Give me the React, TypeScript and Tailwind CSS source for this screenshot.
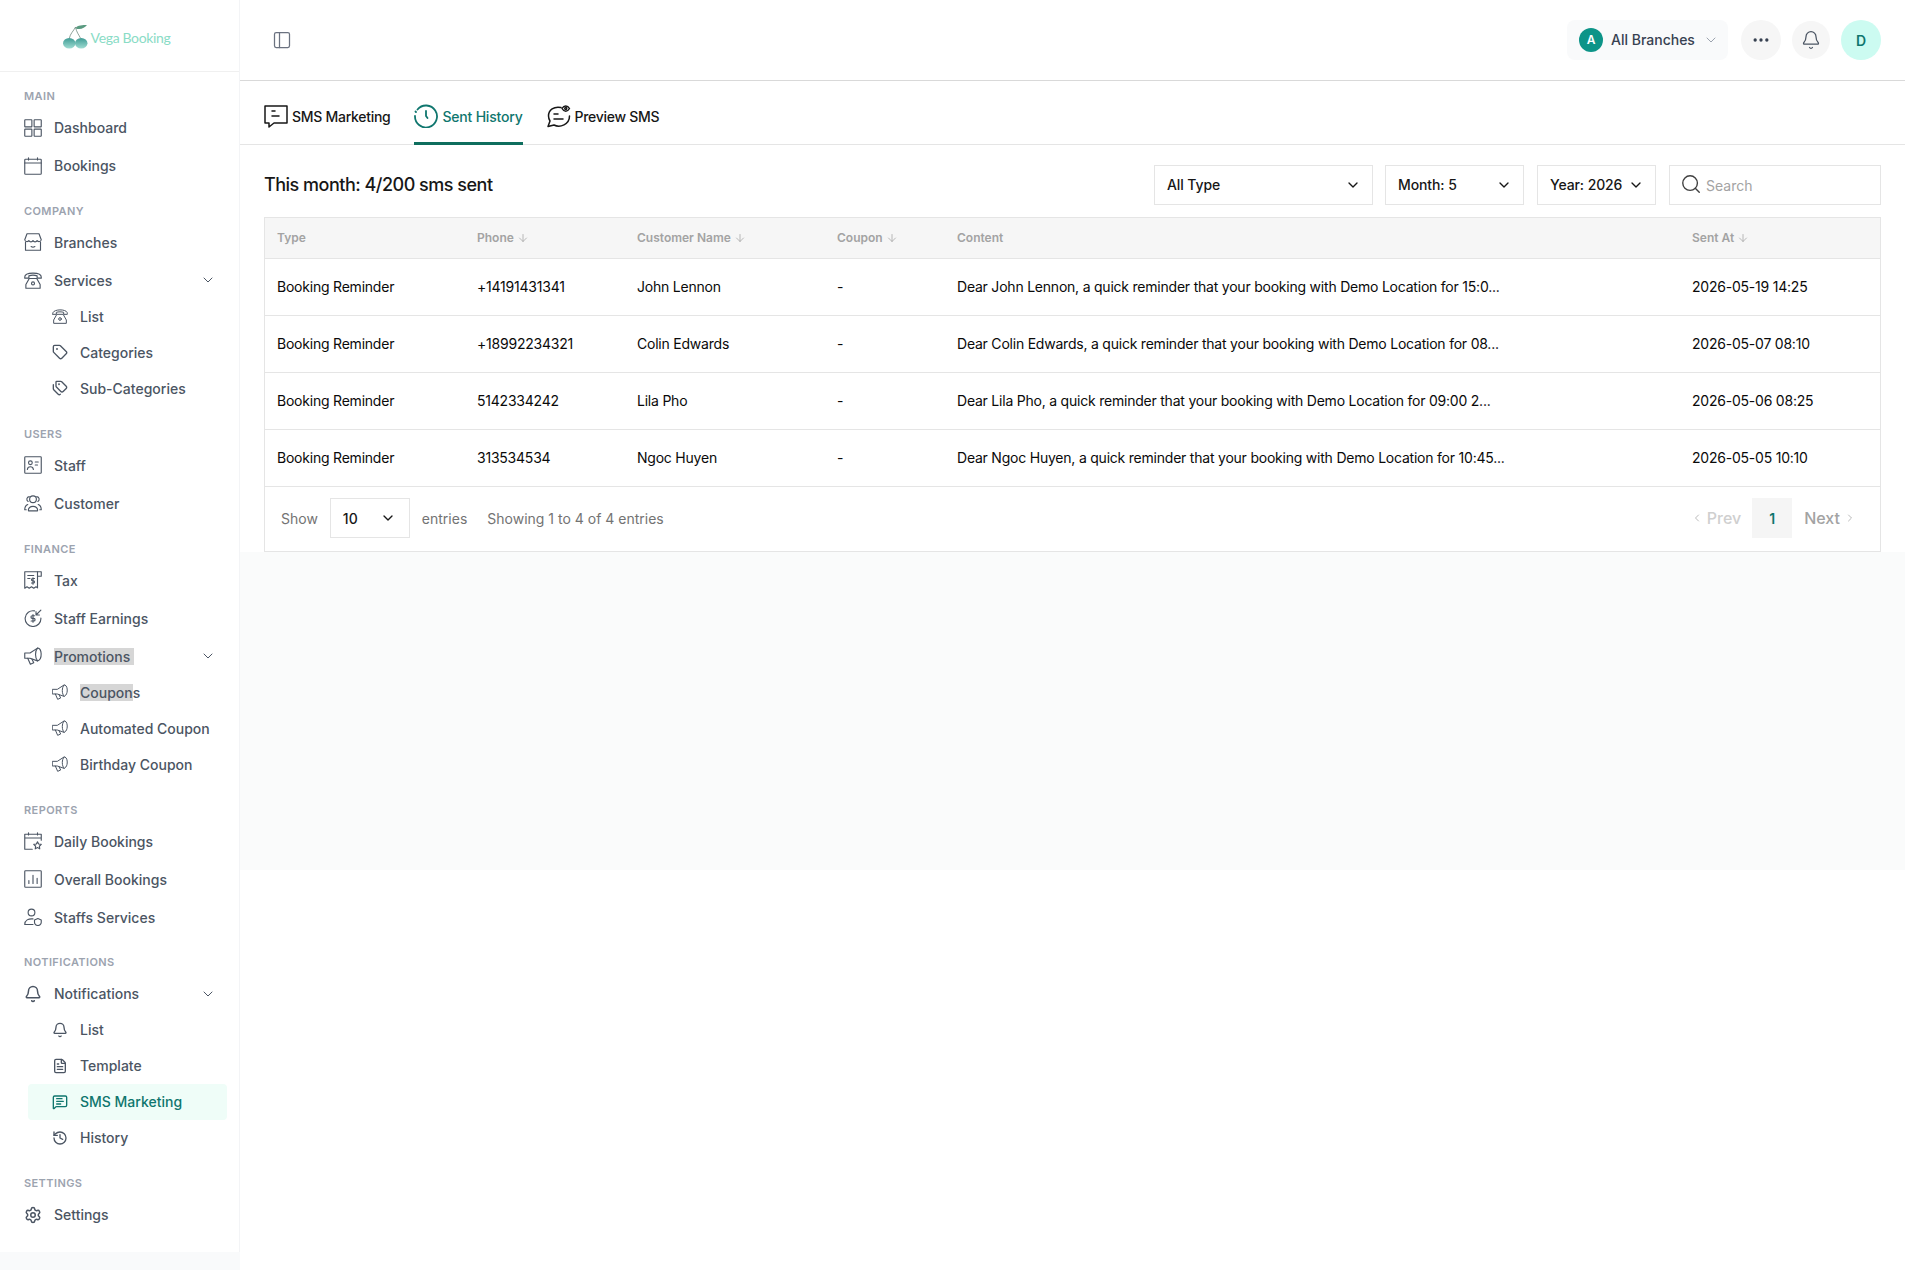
import { ReactNode } from 'react';
import { Bell, ChevronDown, ChevronLeft, ChevronRight, ArrowDown, Ellipsis, FileText, History, MessageSquareText, PanelLeft, Search, Settings, Tag, Tags } from 'lucide-react';

type IconProps = { className?: string };

const Svg = ({ className, children, width = 1.5 }: IconProps & { children: ReactNode; width?: number }) => (
  <svg viewBox="0 0 24 24" fill="none" stroke="currentColor" strokeWidth={width} strokeLinecap="round" strokeLinejoin="round" className={className}>
    {children}
  </svg>
);

const GridIcon = ({ className }: IconProps) => (
  <Svg className={className}>
    <rect x="1" y="1" width="9.5" height="9.5" rx="0.6" />
    <rect x="13.5" y="1" width="9.5" height="9.5" rx="0.6" />
    <rect x="1" y="13.5" width="9.5" height="9.5" rx="0.6" />
    <rect x="13.5" y="13.5" width="9.5" height="9.5" rx="0.6" />
  </Svg>
);
const CalendarIcon = ({ className }: IconProps) => (
  <Svg className={className}>
    <rect x="1" y="3" width="22" height="20" rx="1" />
    <path d="M1 8h22M6 1v3M18 1v3" />
  </Svg>
);
const StoreIcon = ({ className }: IconProps) => (
  <Svg className={className}>
    <path d="M4 1h16l3 8a3 3 0 0 1-5.500 1 3 3 0 0 1-5.500 0 3 3 0 0 1-5.500 0A3 3 0 0 1 1 9z" />
    <path d="M2 12v11h20V12M9.500 18c1.500 1 3.500 1 5 0" />
  </Svg>
);
const PhoneIcon = ({ className }: IconProps) => (
  <Svg className={className}>
    <path d="M1 8c0-7 22-7 22 0v1.500h-5.500V6.500c-3-1-8-1-11 0v3H1z" />
    <path d="M7 10l-4.500 8v5h19v-5L17 10z" />
    <circle cx="12" cy="16.500" r="2" />
  </Svg>
);
const StaffIcon = ({ className }: IconProps) => (
  <Svg className={className}>
    <rect x="1" y="1" width="22" height="22" rx="1" />
    <circle cx="8.500" cy="9" r="2.500" />
    <path d="M4.500 18c.5-5 7.500-5 8 0M15 8h4M15 12h3" />
  </Svg>
);
const CustomerIcon = ({ className }: IconProps) => (
  <Svg className={className}>
    <circle cx="12" cy="7" r="4.500" />
    <path d="M5.500 10A3.500 3.500 0 0 1 7 3.500M18.500 10A3.500 3.500 0 0 0 17 3.500" />
    <path d="M6 22.500c-1.500-8 13.500-8 12 0z" />
    <path d="M3 21H1c0-4 1.500-6 4-7M21 21h2c0-4-1.500-6-4-7" />
  </Svg>
);
const TaxIcon = ({ className }: IconProps) => (
  <Svg className={className}>
    <path d="M18 1H1v22l3-2 3 2 3-2 3 2 3-2 2 1.500V1" />
    <path d="M18 1h5v6h-5M5 6h8M5 10h3" />
    <path d="M14 10h-2.500a1.500 1.500 0 0 0 0 3h1a1.500 1.500 0 0 1 0 3H10M12 9v8.500" />
  </Svg>
);
const EarningsIcon = ({ className }: IconProps) => (
  <Svg className={className}>
    <path d="M14 2.500A10.500 10.500 0 1 0 22.500 12" />
    <path d="M22.500 1.500 16 8M16 3.500V8h4.500" />
    <path d="M14 9h-3a1.500 1.500 0 0 0 0 3.500h2a1.500 1.500 0 0 1 0 3.500H9.500M12 7.500v10" />
  </Svg>
);
const MegaphoneIcon = ({ className }: IconProps) => (
  <Svg className={className}>
    <path d="M1 8h7l10-6.500c6-1 7 15 0 17L8 15H1z" />
    <path d="M18 1.500c-3.500 4-3.500 13 0 17" />
    <path d="m5 15 3.500 8 4.500-2-2.500-5" />
  </Svg>
);
const DailyIcon = ({ className }: IconProps) => (
  <Svg className={className}>
    <path d="M11 23H1V3h22v8M1 8h22M6 1v3M18 1v3" />
    <path d="m18 13 1.500 3 3.500.5-2.500 2.500.5 3.500-3-1.700-3 1.700.5-3.500-2.500-2.500 3.500-.5z" />
  </Svg>
);
const BarsIcon = ({ className }: IconProps) => (
  <Svg className={className}>
    <rect x="1" y="1" width="22" height="22" rx="1" />
    <path d="M6.500 18v-4M12 18V7M17.500 18v-7" />
  </Svg>
);
const StaffServiceIcon = ({ className }: IconProps) => (
  <Svg className={className}>
    <circle cx="10" cy="6" r="4.500" />
    <path d="M1 22c0-6 5-8 11-7.500M1 22h11" />
    <path d="M18.500 14l4.500 2v3c0 2.500-2 4-4.500 4.500-2.500-.5-4.500-2-4.500-4.500v-3z" />
  </Svg>
);
const ChatTabIcon = ({ className }: IconProps) => (
  <Svg className={className}>
    <path d="M1 2h22v17H10l-5 4v-4H1z" />
    <path d="M8 7h3M8 12h7" />
  </Svg>
);
const ClockTabIcon = ({ className }: IconProps) => (
  <Svg className={className} width={1.8}>
    <path d="M3.500 5.500A11 11 0 1 1 1 12" />
    <path d="M1.500 7.500 2 8M12 7v5l1.500 2" />
  </Svg>
);
const PreviewTabIcon = ({ className }: IconProps) => (
  <Svg className={className}>
    <path d="M14 3.500C7 2 1.500 6 1.500 12c0 2 .6 3.500 1.500 5l-2 5.500 6-1.500c6 3 15.500-.5 15.500-9" />
    <path d="M7 10h4M7 15h9" />
    <path d="M15 4.500c2-3.500 5.500-3.500 7.500 0-2 3.500-5.500 3.500-7.500 0z" />
    <circle cx="18.750" cy="4.500" r="1" />
  </Svg>
);
const BoldSms = ({ className }: IconProps) => <MessageSquareText className={className} strokeWidth={2} />;
const BoldHistory = ({ className }: IconProps) => <History className={className} strokeWidth={2} />;

const Logo = () => (
  <div className="flex items-center gap-[3px] -ml-[6px] mt-[3px]">
    <svg viewBox="0 0 24 24" className="w-[25px] h-[25px]">
      <defs>
        <linearGradient id="cherry" x1="0" y1="0" x2="0" y2="1">
          <stop offset="0" stopColor="#3f9c95" />
          <stop offset="1" stopColor="#9fdcd2" />
        </linearGradient>
      </defs>
      <path d="M12 2 C 10 6, 7 8, 6 13 M12 2 C 13 7, 15 9, 17 13" fill="none" stroke="#4b6b5f" strokeWidth="0.6" />
      <path d="M12 3 C 14 0, 19 0, 23 0 C 21 3, 16 5, 12 3z" fill="#5a9a80" />
      <ellipse cx="6" cy="17.500" rx="6" ry="5" fill="url(#cherry)" />
      <ellipse cx="17.500" cy="17.500" rx="6" ry="5" fill="url(#cherry)" />
    </svg>
    <span className="[font-family:Lato,sans-serif] text-[14px] font-normal tracking-[-0.35px] text-[#8adcc6]">Vega Booking</span>
  </div>
);

type Item = { label: ReactNode; icon: (p: IconProps) => ReactNode; open?: boolean; children?: { label: ReactNode; icon: (p: IconProps) => ReactNode; active?: boolean }[] };
type Group = { title: string; items: Item[] };

const groups: Group[] = [
  { title: 'MAIN', items: [{ label: 'Dashboard', icon: GridIcon }, { label: 'Bookings', icon: CalendarIcon }] },
  {
    title: 'COMPANY',
    items: [
      { label: 'Branches', icon: StoreIcon },
      {
        label: 'Services',
        icon: PhoneIcon,
        open: true,
        children: [
          { label: 'List', icon: PhoneIcon },
          { label: 'Categories', icon: Tag },
          { label: 'Sub-Categories', icon: Tags },
        ],
      },
    ],
  },
  { title: 'USERS', items: [{ label: 'Staff', icon: StaffIcon }, { label: 'Customer', icon: CustomerIcon }] },
  {
    title: 'FINANCE',
    items: [
      { label: 'Tax', icon: TaxIcon },
      { label: 'Staff Earnings', icon: EarningsIcon },
      {
        label: <span className="bg-[#d6d6d6] pr-1">Promotions</span>,
        icon: MegaphoneIcon,
        open: true,
        children: [
          { label: <><span className="bg-[#d6d6d6]">Coupon</span>s</>, icon: MegaphoneIcon },
          { label: 'Automated Coupon', icon: MegaphoneIcon },
          { label: 'Birthday Coupon', icon: MegaphoneIcon },
        ],
      },
    ],
  },
  {
    title: 'REPORTS',
    items: [
      { label: 'Daily Bookings', icon: DailyIcon },
      { label: 'Overall Bookings', icon: BarsIcon },
      { label: 'Staffs Services', icon: StaffServiceIcon },
    ],
  },
  {
    title: 'NOTIFICATIONS',
    items: [
      {
        label: 'Notifications',
        icon: Bell,
        open: true,
        children: [
          { label: 'List', icon: Bell },
          { label: 'Template', icon: FileText },
          { label: 'SMS Marketing', icon: BoldSms, active: true },
          { label: 'History', icon: BoldHistory },
        ],
      },
    ],
  },
  { title: 'SETTINGS', items: [{ label: 'Settings', icon: Settings }] },
];

const rows = [
  ['Booking Reminder', '+14191431341', 'John Lennon', '-', 'Dear John Lennon, a quick reminder that your booking with Demo Location for 15:0...', '2026-05-19 14:25'],
  ['Booking Reminder', '+18992234321', 'Colin Edwards', '-', 'Dear Colin Edwards, a quick reminder that your booking with Demo Location for 08...', '2026-05-07 08:10'],
  ['Booking Reminder', '5142334242', 'Lila Pho', '-', 'Dear Lila Pho, a quick reminder that your booking with Demo Location for 09:00 2...', '2026-05-06 08:25'],
  ['Booking Reminder', '313534534', 'Ngoc Huyen', '-', 'Dear Ngoc Huyen, a quick reminder that your booking with Demo Location for 10:45...', '2026-05-05 10:10'],
];

const Sidebar = () => (
  <aside className="w-[240px] shrink-0 bg-[#f9fafb]">
    <div className="h-[1252px] bg-white border-r border-[#f3f4f6]">
      <div className="h-[72px] flex items-center justify-center border-b border-[#f0f0f0]">
        <Logo />
      </div>
      <nav className="pt-4 flex flex-col gap-[18.4px]">
        {groups.map((g) => (
          <div key={g.title}>
            <div className="h-4 mb-[4.5px] pl-6 text-[11px] leading-4 font-semibold tracking-[0.4px] text-[#9ca3af]">{g.title}</div>
            {g.items.map((it, i) => (
              <div key={i}>
                <div className="h-[38px] pl-6 pr-[23px] flex items-center text-[14px] font-medium text-[#4b5563]">
                  <it.icon className="w-[18px] h-[18px] mr-3 shrink-0 text-[#4b5563]" />
                  <span className="flex-1">{it.label}</span>
                  {it.open && <ChevronDown className="w-4 h-4 text-[#4b5563]" strokeWidth={1.5} />}
                </div>
                {it.children && (
                  <div className="-mt-px mb-px">
                    {it.children.map((c, j) => (
                      <div key={j} className={`h-9 ml-7 mr-3 pl-6 flex items-center text-[14px] font-medium rounded ${c.active ? 'bg-[#effdf8] text-[#0f766e]' : 'text-[#4b5563]'}`}>
                        <c.icon className="w-4 h-4 mr-3 shrink-0" />
                        <span>{c.label}</span>
                      </div>
                    ))}
                  </div>
                )}
              </div>
            ))}
          </div>
        ))}
      </nav>
    </div>
  </aside>
);

const Header = () => (
  <header className="h-[81px] bg-white border-b border-[#d9d9d9] flex items-center pl-8 pr-6">
    <PanelLeft className="w-5 h-5 text-[#6b7280]" strokeWidth={1.5} />
    <div className="ml-auto flex items-center">
      <div className="h-10 w-[161px] rounded-lg bg-[#f9fafb] flex items-center pl-3 text-[14px] font-medium text-[#374151]">
        <span className="w-6 h-6 rounded-full bg-[#0d9488] text-white text-[12px] font-semibold flex items-center justify-center">A</span>
        <span className="ml-2 -mt-px">All Branches</span>
        <ChevronDown className="w-4 h-4 ml-2 text-[#9ca3af]" strokeWidth={1.5} />
      </div>
      <div className="ml-[13px] w-10 h-10 rounded-full bg-[#f6f6f6] flex items-center justify-center text-[#374151]">
        <Ellipsis className="w-5 h-5" />
      </div>
      <div className="ml-[11px] w-[38px] h-[38px] rounded-full bg-[#f6f6f6] flex items-center justify-center text-[#4b5563]">
        <Bell className="w-5 h-5" strokeWidth={1.5} />
      </div>
      <div className="ml-[11px] w-10 h-10 rounded-full bg-[#ccfbf1] flex items-center justify-center text-[14px] font-semibold text-[#0f766e]">D</div>
    </div>
  </header>
);

const Tabs = () => (
  <div className="h-[64px] bg-white border-b border-[#e5e5e5] flex gap-6 pl-6 text-[14px] font-medium tracking-[-0.28px] text-[#171717]">
    <div className="flex items-center gap-1 h-[64px] pt-[9px] border-b-[3px] border-transparent">
      <ChatTabIcon className="w-6 h-6" />
      <span>SMS Marketing</span>
    </div>
    <div className="flex items-center gap-1 h-[64px] pt-[9px] border-b-[3px] border-[#0f6e5e] text-[#0f766e]">
      <ClockTabIcon className="w-6 h-6" />
      <span className="tracking-[-0.2px]">Sent History</span>
    </div>
    <div className="flex items-center gap-1 h-[64px] pt-[9px] border-b-[3px] border-transparent">
      <PreviewTabIcon className="w-6 h-6" />
      <span>Preview SMS</span>
    </div>
  </div>
);

const Filter = ({ label, w }: { label: string; w: string }) => (
  <div className={`${w} h-10 border border-[#e5e5e5] flex items-center justify-between pl-3 pr-[11px] text-[14px] font-medium tracking-[-0.1px] text-[#171717]`}>
    <span className="-mt-px">{label}</span>
    <ChevronDown className="w-4 h-4" strokeWidth={2} />
  </div>
);

const Th = ({ w, label, sort }: { w: string; label: string; sort?: boolean }) => (
  <div className={`${w} px-3 flex items-center gap-[3px] text-[12px] font-semibold text-[#a3a3a3]`}>
    {label}
    {sort && <ArrowDown className="w-3 h-3" strokeWidth={1.5} />}
  </div>
);

const colW = ['w-[200px]', 'w-[160px]', 'w-[200px]', 'w-[120px]', 'w-[735px]', 'w-[200px]'];

const Table = () => (
  <div className="border border-[#e5e5e5] bg-white">
    <div className="h-[41px] bg-[#f6f6f6] border-b border-[#e5e5e5] flex">
      <Th w={colW[0]} label="Type" />
      <Th w={colW[1]} label="Phone" sort />
      <Th w={colW[2]} label="Customer Name" sort />
      <Th w={colW[3]} label="Coupon" sort />
      <Th w={colW[4]} label="Content" />
      <Th w={colW[5]} label="Sent At" sort />
    </div>
    {rows.map((r) => (
      <div key={r[1]} className="h-[57px] pb-[2px] border-b border-[#e5e5e5] flex items-center text-[14px] tracking-[-0.22px] text-[#0a0a0a]">
        {r.map((c, i) => (
          <div key={i} className={`${colW[i]} px-3 whitespace-nowrap`}>{c}</div>
        ))}
      </div>
    ))}
    <div className="h-[64px] pb-[2px] pl-4 pr-6 flex items-center text-[14px] text-[#737373]">
      <span>Show</span>
      <div className="ml-3 w-[80px] h-10 border border-[#e5e5e5] flex items-center justify-between pl-3 pr-[13px] font-medium text-[#171717]">
        <span>10</span>
        <ChevronDown className="w-4 h-4" strokeWidth={2} />
      </div>
      <span className="ml-3">entries</span>
      <span className="ml-5">Showing 1 to 4 of 4 entries</span>
      <div className="ml-auto flex items-center text-[16px] font-medium">
        <ChevronLeft className="w-3 h-3 text-[#a3a3a3]" strokeWidth={1.5} />
        <span className="ml-1 text-[#cfcfcf]">Prev</span>
        <span className="ml-[11px] w-10 h-10 bg-[#f5f5f5] flex items-center justify-center text-[14px] font-semibold text-[#0f766e]">1</span>
        <span className="ml-3 text-[#a3a3a3]">Next</span>
        <ChevronRight className="ml-1 w-3 h-3 text-[#a3a3a3]" strokeWidth={1.5} />
      </div>
    </div>
  </div>
);

export default function App() {
  return (
    <div className="flex min-h-[1270px] bg-white [font-family:Inter,sans-serif]">
      <Sidebar />
      <main className="flex-1 min-w-0 h-[870px] bg-[#fafbfb]">
        <Header />
        <Tabs />
        <div className="bg-white px-6">
          <div className="pt-5 pb-3 flex items-center">
            <h1 className="-mt-px text-[18px] font-medium tracking-[-0.5px] text-[#171717]">This month: 4/200 sms sent</h1>
            <div className="ml-auto flex items-center gap-[13px]">
              <Filter label="All Type" w="w-[219px] -mr-px" />
              <Filter label="Month: 5" w="w-[139px]" />
              <Filter label="Year: 2026" w="w-[119px]" />
              <div className="w-[212px] h-10 border border-[#e5e5e5] flex items-center pl-[10px] text-[14px] text-[#a3a3a3]">
                <Search className="w-[22px] h-[22px] text-[#404040] mr-1 -mt-[3px]" strokeWidth={1.5} />
                <span className="pt-px">Search</span>
              </div>
            </div>
          </div>
          <Table />
        </div>
      </main>
    </div>
  );
}
